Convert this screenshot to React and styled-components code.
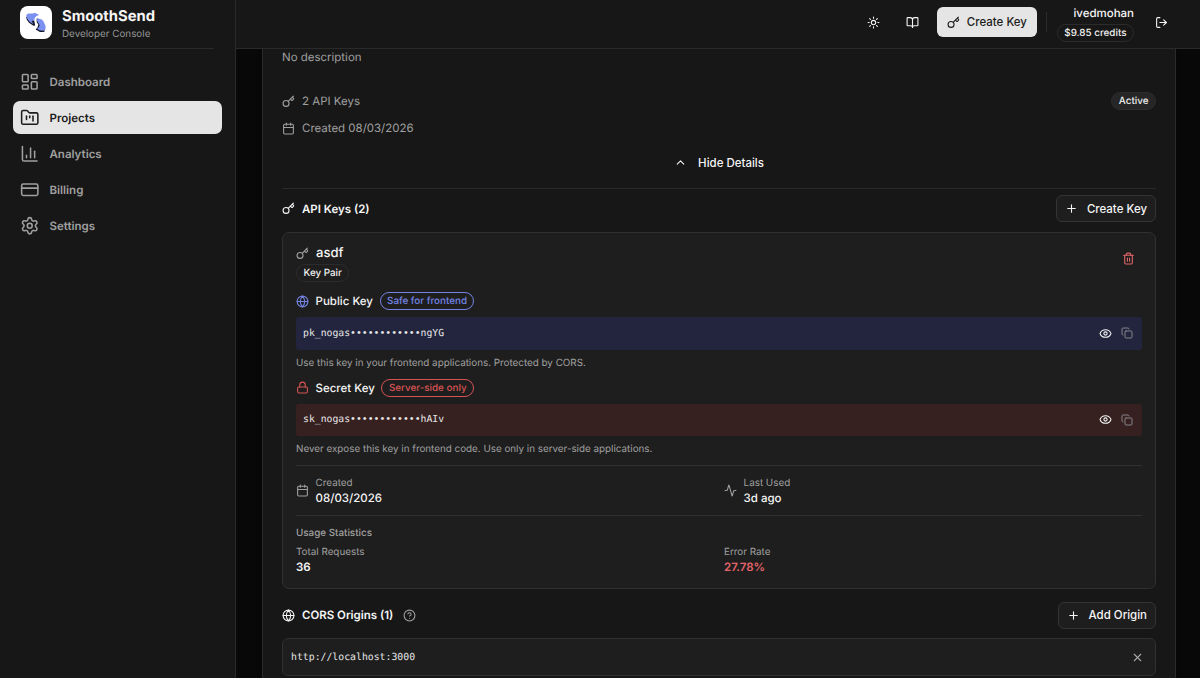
import styled, { createGlobalStyle } from 'styled-components';
import {
  Activity,
  BookOpen,
  Calendar,
  ChartColumn,
  ChevronUp,
  CircleHelp,
  Copy,
  CreditCard,
  Eye,
  FolderKanban,
  Globe,
  Key,
  LayoutDashboard,
  Lock,
  LogOut,
  Plus,
  Settings,
  Sun,
  Trash2,
  X,
} from 'lucide-react';

const GlobalStyle = createGlobalStyle`
  * {
    box-sizing: border-box;
  }
  body {
    margin: 0;
    background: #090909;
    color: #f5f5f5;
    font-family: Inter, sans-serif;
    font-size: 11.47px;
    overflow: hidden;
    text-rendering: geometricPrecision;
    -webkit-font-smoothing: antialiased;
  }
  button {
    font: inherit;
    color: inherit;
    background: none;
    border: 0;
    padding: 0;
    cursor: pointer;
  }
  svg {
    display: block;
    flex-shrink: 0;
  }
`;

const Shell = styled.div`
  display: grid;
  grid-template-columns: 236px 1fr;
  height: 678px;
  overflow: hidden;
`;

const Sidebar = styled.aside`
  background: #171717;
  border-right: 1px solid #2a2a2a;
`;

const Brand = styled.div`
  display: flex;
  gap: 10px;
  height: 49px;
  margin: 0 21px 0 20px;
  padding-top: 6px;
  border-bottom: 1px solid #2a2a2a;
`;

const LogoTile = styled.div`
  width: 32px;
  height: 33px;
  border-radius: 8px;
  background: #fff;
`;

const BrandName = styled.div`
  font-size: 14.8px;
  font-weight: 700;
  line-height: 20px;
`;

const BrandSub = styled.div`
  font-size: 9.85px;
  line-height: 17px;
  color: #959595;
`;

const Nav = styled.nav`
  display: flex;
  flex-direction: column;
  gap: 3px;
  padding: 16px 13px;
`;

const NavItem = styled.a`
  display: flex;
  align-items: center;
  gap: 10px;
  height: 33px;
  padding-left: 7px;
  border-radius: 7px;
  font-size: 11.5px;
  font-weight: 600;
  color: ${({ $active }) => ($active ? '#1c1c1c' : '#a0a0a0')};
  background: ${({ $active }) => ($active ? '#e5e5e5' : 'transparent')};
`;

const Column = styled.div`
  display: flex;
  flex-direction: column;
  min-width: 0;
  height: 678px;
`;

const TopBar = styled.header`
  display: flex;
  flex: none;
  align-items: center;
  justify-content: flex-end;
  height: 49px;
  padding: 0 32px 4px 0;
  background: #171717;
  border-bottom: 1px solid #2a2a2a;
`;

const IconLink = styled.button`
  margin-right: ${({ $gap }) => $gap}px;
`;

const PrimaryButton = styled.button`
  display: flex;
  align-items: center;
  gap: 7px;
  width: 100px;
  height: 30px;
  padding-left: 10px;
  border-radius: 6px;
  background: #e5e5e5;
  color: #1c1c1c;
  font-weight: 500;
  white-space: nowrap;
`;

const Separator = styled.div`
  width: 1px;
  height: 20px;
  margin: 0 10px 0 9px;
  background: #2a2a2a;
`;

const Account = styled.div`
  display: flex;
  flex-direction: column;
  align-items: flex-end;
  gap: 3px;
  margin-right: 21px;
  padding-top: 2px;
  font-weight: 500;
  line-height: 16px;
`;

const Pill = styled.span`
  display: flex;
  align-items: center;
  width: fit-content;
  height: 18px;
  padding: 0 6.5px;
  border: 1px solid ${({ $color }) => $color || '#2c2c2c'};
  border-radius: 9px;
  background: ${({ $filled }) => ($filled ? '#262626' : 'transparent')};
  color: ${({ $color }) => $color || '#f0f0f0'};
  font-size: 9.85px;
  font-weight: 500;
  white-space: nowrap;
`;

const Main = styled.main`
  flex: 1;
  min-height: 0;
  padding: 0 24px 0 26px;
  overflow: hidden;
`;

const ProjectCard = styled.section`
  height: 660px;
  padding: 0 19px;
  border: 1px solid #2a2a2a;
  border-top: 0;
  background: #171717;
  box-shadow: 0 0 16px rgba(0, 0, 0, 0.5);
`;

const Description = styled.p`
  margin: 0;
  line-height: 17px;
  color: #a0a0a0;
`;

const MetaRow = styled.div`
  display: flex;
  align-items: center;
  gap: 7px;
  height: 18px;
  margin-top: ${({ $top }) => $top}px;
  color: #a0a0a0;

  ${Pill} {
    margin-left: auto;
  }
`;

const ToggleRow = styled.button`
  display: flex;
  align-items: center;
  justify-content: center;
  gap: 11px;
  width: 100%;
  height: 52px;
  border-bottom: 1px solid #2a2a2a;
  font-weight: 500;
`;

const SectionHead = styled.div`
  display: flex;
  align-items: center;
  gap: 7px;
  height: ${({ $height }) => $height}px;
  padding: ${({ $pad }) => $pad};
  font-weight: 600;
`;

const HelpMark = styled.span`
  margin-left: 3px;
  color: #a0a0a0;
`;

const OutlineButton = styled.button`
  display: flex;
  align-items: center;
  gap: 9px;
  height: 27px;
  margin-left: auto;
  padding: 0 8px;
  border: 1px solid #343434;
  border-radius: 6px;
  background: #1e1e1e;
  font-weight: 500;
`;

const KeyCard = styled.div`
  height: 357px;
  padding: 11px 13px 0;
  border: 1px solid #303030;
  border-radius: 7px;
  background: #1e1e1e;
`;

const KeyHead = styled.div`
  display: flex;
  align-items: flex-start;
  justify-content: space-between;
  height: 39px;
  padding-right: 7px;

  button {
    margin-top: 8px;
  }
`;

const KeyName = styled.div`
  display: flex;
  align-items: center;
  gap: 7px;
  height: 18px;
  margin-bottom: 2px;
  font-size: 13.1px;
  font-weight: 500;

  svg {
    color: #a0a0a0;
  }
`;

const KeyLabel = styled.div`
  display: flex;
  align-items: center;
  gap: 6.6px;
  height: 18px;
  margin-top: 9px;
  font-weight: 500;

  > svg {
    color: ${({ $color }) => $color};
  }
`;

const Secret = styled.div`
  display: flex;
  align-items: center;
  gap: 9px;
  height: 32.5px;
  margin-top: 7px;
  padding: 0 9px 0 7px;
  border-radius: 3px;
  background: ${({ $bg }) => $bg};

  code {
    flex: 1;
    font-family: 'DejaVu Sans Mono', monospace;
    font-size: 9.78px;
    color: #e8e8e8;
  }

  svg:last-child {
    color: #85838a;
  }
`;

const Hint = styled.p`
  margin: 6px 0 0;
  font-size: 9.84px;
  line-height: 14px;
  color: #a0a0a0;
`;

const StatsGrid = styled.div`
  display: grid;
  grid-template-columns: 428px 1fr;
`;

const Times = styled(StatsGrid)`
  align-items: center;
  height: 51px;
  margin-top: 9px;
  border: solid #303030;
  border-width: 1px 0;
`;

const Stat = styled.div`
  display: flex;
  align-items: center;
  gap: 6.6px;
  color: #a0a0a0;
  font-size: 9.85px;
  line-height: 14px;
`;

const StatValue = styled.div`
  font-size: 11.47px;
  font-weight: ${({ $strong }) => ($strong ? 600 : 500)};
  line-height: 16px;
  color: ${({ $danger }) => ($danger ? '#e5646a' : '#f5f5f5')};
`;

const UsageTitle = styled.div`
  margin: 10px 0 5px;
  font-size: 9.85px;
  font-weight: 500;
  line-height: 14px;
  color: #a0a0a0;
`;

const OriginRow = styled.div`
  display: flex;
  align-items: center;
  justify-content: space-between;
  height: 38px;
  padding: 0 11.5px 0 8px;
  border: 1px solid #303030;
  border-radius: 6px;
  background: #1e1e1e;

  code {
    font-family: 'DejaVu Sans Mono', monospace;
    font-size: 9.82px;
    color: #e8e8e8;
  }

  svg {
    color: #a8a8a8;
  }
`;

const navItems = [
  { label: 'Dashboard', icon: LayoutDashboard },
  { label: 'Projects', icon: FolderKanban, active: true },
  { label: 'Analytics', icon: ChartColumn },
  { label: 'Billing', icon: CreditCard },
  { label: 'Settings', icon: Settings },
];

const keyPairs = [
  {
    title: 'Public Key',
    icon: Globe,
    badge: 'Safe for frontend',
    color: '#7484e4',
    bg: '#23253e',
    value: 'pk_nogas••••••••••••ngYG',
    hint: 'Use this key in your frontend applications. Protected by CORS.',
  },
  {
    title: 'Secret Key',
    icon: Lock,
    badge: 'Server-side only',
    color: '#d65353',
    bg: '#362020',
    value: 'sk_nogas••••••••••••hAIv',
    hint: 'Never expose this key in frontend code. Use only in server-side applications.',
  },
];

function Logo() {
  return (
    <LogoTile>
      <svg width="32" height="33" viewBox="0 0 32 33">
        <g fill="#17182b">
          <path d="M6 10.5 8 12 14.2 14.4 15.2 19.6 13.4 19.8 9 16.8 6.8 13.8Z" />
          <path d="M16.6 12.6 18.4 13 19.6 17 25.2 22 24.2 26 20 26 15.6 23.4 17.6 21.2 18.4 18.6 16.8 16.6Z" />
        </g>
        <g fill="#7b91f2">
          <path d="M6.2 9.8Q6.6 7.9 8.6 7.5L13 7.4 14.4 6.8 19 8.8 16 10.4Q14 12 14.4 14.4L11.6 15 13.4 18.2 9.6 15.8Q7 13.6 6.2 9.8Z" />
          <path d="M17.2 12 21.6 13.6Q23.4 14.6 24 16.4L25.6 20Q26 23.6 24.2 24.6 20.4 25.4 17 22.8 19.4 21.6 19.6 19.6 19.4 18 18 16.8 16.8 15.4 17.2 12Z" />
        </g>
      </svg>
    </LogoTile>
  );
}

function ApiKeyCard() {
  return (
    <KeyCard>
      <KeyHead>
        <div>
          <KeyName>
            <Key size={13} />
            asdf
          </KeyName>
          <Pill>Key Pair</Pill>
        </div>
        <button title="Delete key">
          <Trash2 size={13} color="#e0666a" />
        </button>
      </KeyHead>
      {keyPairs.map(({ title, icon: Icon, badge, color, bg, value, hint }) => (
        <div key={title}>
          <KeyLabel $color={color}>
            <Icon size={13} />
            {title}
            <Pill $color={color}>{badge}</Pill>
          </KeyLabel>
          <Secret $bg={bg}>
            <code>{value}</code>
            <Eye size={13} />
            <Copy size={12} />
          </Secret>
          <Hint>{hint}</Hint>
        </div>
      ))}
      <Times>
        <Stat>
          <Calendar size={13} />
          <div>
            Created
            <StatValue>08/03/2026</StatValue>
          </div>
        </Stat>
        <Stat>
          <Activity size={13} />
          <div>
            Last Used
            <StatValue>3d ago</StatValue>
          </div>
        </Stat>
      </Times>
      <UsageTitle>Usage Statistics</UsageTitle>
      <StatsGrid>
        <Stat>
          <div>
            Total Requests
            <StatValue $strong>36</StatValue>
          </div>
        </Stat>
        <Stat>
          <div>
            Error Rate
            <StatValue $strong $danger>27.78%</StatValue>
          </div>
        </Stat>
      </StatsGrid>
    </KeyCard>
  );
}

export default function App() {
  return (
    <>
      <GlobalStyle />
      <Shell>
        <Sidebar>
          <Brand>
            <Logo />
            <div>
              <BrandName>SmoothSend</BrandName>
              <BrandSub>Developer Console</BrandSub>
            </div>
          </Brand>
          <Nav>
            {navItems.map(({ label, icon: Icon, active }) => (
              <NavItem key={label} $active={active}>
                <Icon size={19.5} strokeWidth={1.9} />
                {label}
              </NavItem>
            ))}
          </Nav>
        </Sidebar>
        <Column>
          <TopBar>
            <IconLink $gap={26} title="Theme">
              <Sun size={13} />
            </IconLink>
            <IconLink $gap={18} title="Docs">
              <BookOpen size={13} />
            </IconLink>
            <PrimaryButton>
              <Key size={13} />
              Create Key
            </PrimaryButton>
            <Separator />
            <Account>
              ivedmohan
              <Pill>$9.85 credits</Pill>
            </Account>
            <IconLink $gap={0} title="Log out">
              <LogOut size={13} />
            </IconLink>
          </TopBar>
          <Main>
            <ProjectCard>
              <Description>No description</Description>
              <MetaRow $top={26}>
                <Key size={13} />
                2 API Keys
                <Pill $filled>Active</Pill>
              </MetaRow>
              <MetaRow $top={9}>
                <Calendar size={13} />
                Created 08/03/2026
              </MetaRow>
              <ToggleRow>
                <ChevronUp size={13} />
                Hide Details
              </ToggleRow>
              <SectionHead $height={43} $pad="0 0 4px">
                <Key size={13} />
                API Keys (2)
                <OutlineButton>
                  <Plus size={13} />
                  Create Key
                </OutlineButton>
              </SectionHead>
              <ApiKeyCard />
              <SectionHead $height={49} $pad="3px 0 0">
                <Globe size={13} />
                CORS Origins (1)
                <HelpMark>
                  <CircleHelp size={13} />
                </HelpMark>
                <OutlineButton>
                  <Plus size={13} />
                  Add Origin
                </OutlineButton>
              </SectionHead>
              <OriginRow>
                <code>http://localhost:3000</code>
                <X size={13} />
              </OriginRow>
            </ProjectCard>
          </Main>
        </Column>
      </Shell>
    </>
  );
}
